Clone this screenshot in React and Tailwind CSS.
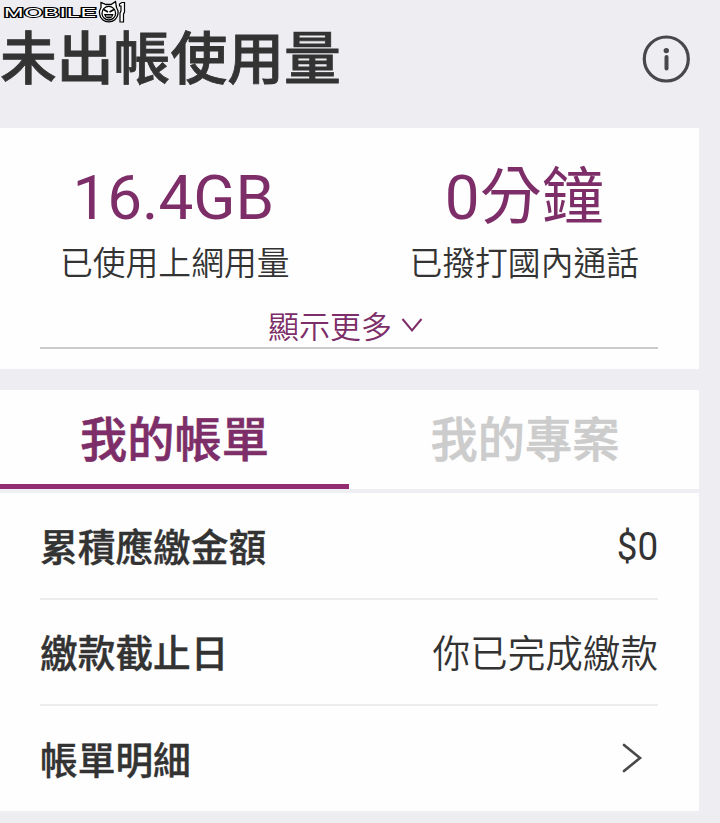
import React from "react";

function BrandMark() {
  return (
    <svg className="absolute left-0 top-0" width="130" height="26" viewBox="0 0 130 26" fill="none">
      <text
        x="4"
        y="16.7"
        textLength="93"
        lengthAdjust="spacingAndGlyphs"
        fontFamily="'Liberation Sans', sans-serif"
        fontWeight="400"
        fontSize="12.8"
        letterSpacing="0.4"
        fill="#fff"
        stroke="#000"
        strokeWidth="2"
        strokeLinejoin="miter"
        paintOrder="stroke"
      >
        MOBILE
      </text>
      <path d="M101 7.500 L101 2.500 L106 4.500 H111 L115.500 1.500 L116.500 7.500 A9.300 9.300 0 1 1 101 7.500Z" fill="#fff" stroke="#000" strokeWidth="1.300" />
      <circle cx="108.800" cy="13.200" r="6.800" fill="#fff" stroke="#000" strokeWidth="1.300" />
      <path d="M103.500 9.500 L108 12 M114 9.500 L109.500 12" stroke="#000" strokeWidth="1.500" />
      <path d="M104 14 H113.500 Q112.500 18.500 108.800 18.500 Q105 18.500 104 14Z" fill="#000" />
      <path d="M106 16 H111.500" stroke="#fff" strokeWidth="1" />
      <path d="M119.500 4 L122 2.500 H124.500 V12 L123.500 14 V22 H120 V13 L121 11 V6 H119.500Z" fill="#fff" stroke="#000" strokeWidth="1.200" />
    </svg>
  );
}

function InfoIcon() {
  return (
    <svg width="48" height="48" viewBox="0 0 48 48" fill="none">
      <circle cx="24.300" cy="24" r="22" stroke="#48484a" strokeWidth="3.200" />
      <circle cx="24.300" cy="15.600" r="2.700" fill="#48484a" />
      <path d="M24.500 22V33.500" stroke="#48484a" strokeWidth="4" strokeLinecap="round" />
    </svg>
  );
}

function Stat({ value, label }) {
  return (
    <div className="flex w-[350px] flex-col items-center">
      <div className="h-[72px] text-[62px] leading-[72px] text-[#7d2e68]">{value}</div>
      <div className="mt-[10px] h-[40px] text-[32.8px] font-[350] leading-[40px]">{label}</div>
    </div>
  );
}

function Row({ label, children, last }) {
  return (
    <div className={`ml-10 mr-[41px] flex items-center justify-between ${last ? "h-[105px]" : "h-[106.5px] border-b-2 border-[#ededef]"}`}>
      <div className="pt-[5px] text-[37.7px] font-medium leading-[48px] [-webkit-text-stroke:0.4px_#333333]">{label}</div>
      {children}
    </div>
  );
}

export default function App() {
  return (
    <div className="relative h-[823px] w-[720px] overflow-hidden bg-[#eeedf2] font-[Roboto,'Noto_Sans_CJK_TC',sans-serif] text-[#333333]">
      <header className="flex h-[128px] justify-between pr-[30px]">
        <h1 className="mt-[24px] h-[72px] whitespace-nowrap text-[56.8px] font-medium leading-[72px] [-webkit-text-stroke:0.8px_#333333]">未出帳使用量</h1>
        <div className="mt-[35px]"><InfoIcon /></div>
      </header>
      <section className="h-[241px] w-[699px] bg-[#fefefe] pt-[34px]">
        <div className="flex">
          <Stat value={<span className="mr-[3px]">16.4GB</span>} label="已使用上網用量" />
          <Stat value="0分鐘" label="已撥打國內通話" />
        </div>
        <div className="ml-10 mt-[23px] flex h-[42px] w-[618px] items-center justify-center gap-[9px] border-b-2 border-[#cbcbcb] pr-[7px] text-[#7d2e68]">
          <span className="pt-[2px] text-[31px] font-[350] leading-[40px]">顯示更多</span>
          <svg className="mb-[4px]" width="22" height="16" viewBox="0 0 22 16" fill="none">
            <path d="M1.500 2L11 13.500L20.500 2" stroke="#7d2e68" strokeWidth="2" />
          </svg>
        </div>
      </section>
      <section className="mt-[21px] h-[421px] w-[699px] bg-[#fefefe]">
        <div className="flex h-[103px] border-b-4 border-[#efeef2] text-[47.2px] font-medium">
          <div className="flex w-[349px] justify-center border-b-[5px] border-[#922d74] leading-[103px] text-[#7d2e68] [-webkit-text-stroke:0.6px_#7d2e68]">我的帳單</div>
          <div className="flex w-[350px] justify-center pl-[2px] leading-[103px] text-[#cccccc] [-webkit-text-stroke:0.6px_#cccccc]">我的專案</div>
        </div>
        <Row label="累積應繳金額"><span className="origin-right scale-x-[0.96] pt-[4px] text-[38.4px] leading-[48px]">$0</span></Row>
        <Row label="繳款截止日"><span className="pt-[4px] text-[37.6px] font-[350] leading-[48px]">你已完成繳款</span></Row>
        <Row label="帳單明細" last>
          <svg className="mb-[2px] mr-[15px]" width="22" height="30" viewBox="0 0 22 30" fill="none">
            <path d="M3 2L19 15L3 28" stroke="#48484a" strokeWidth="2.600" strokeLinecap="round" />
          </svg>
        </Row>
      </section>
      <BrandMark />
    </div>
  );
}
